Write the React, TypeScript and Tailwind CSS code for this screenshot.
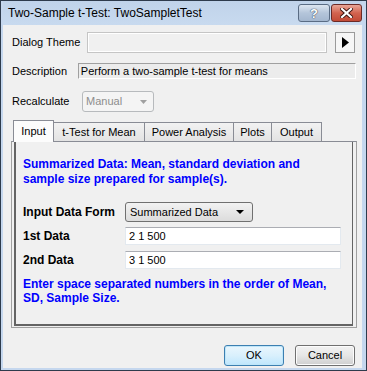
import React from 'react';

const font = { fontFamily: '"Liberation Sans", Arial, sans-serif' };

const Tab = ({ label, active, w }: { label: string; active?: boolean; w: string }) => (
  <div
    className={`${w} flex items-center justify-center border border-[#898c95] text-[11px] text-black ${
      active
        ? 'h-[22px] bg-[#fcfcfc] border-b-0 relative z-10 -mb-px'
        : 'h-[19px] border-b-0 -ml-px bg-gradient-to-b from-[#f2f2f2] to-[#e3e3e3]'
    }`}
  >
    {label}
  </div>
);

const WinButton = ({ label, primary }: { label: string; primary?: boolean }) => (
  <button
    className={`w-[60px] h-[21px] rounded-[3px] text-[11px] text-black border ${
      primary
        ? 'border-[#3c7fb1] bg-gradient-to-b from-[#eaf6fd] via-[#d9f0fc] to-[#bee6fd] shadow-[inset_0_0_0_1px_#bfe6f9]'
        : 'border-[#707070] bg-gradient-to-b from-[#f2f2f2] via-[#e6e6e6] to-[#cfcfcf] shadow-[inset_0_0_0_1px_#fcfcfc]'
    }`}
  >
    {label}
  </button>
);

export default function App() {
  return (
    <div
      className="w-[367px] h-[371px] bg-[#c5d7ee] border border-[#2e3b4c] flex flex-col pl-[2px] pr-[4px] pb-[2px] overflow-hidden"
      style={font}
    >
      {/* title bar */}
      <div className="h-[24px] flex items-start shrink-0 bg-gradient-to-b from-[#c0d3ea] to-[#c8daef]">
        <div className="text-[12px] text-black pl-[5px] pt-[5px] leading-[14px]">
          Two-Sample t-Test: TwoSampletTest
        </div>
        <div className="ml-auto flex pt-[3px] gap-[1px]">
          <div className="w-[32px] h-[18px] rounded-[3px] border border-[#5a6c84] bg-gradient-to-b from-[#dde6f1] via-[#b4c5da] to-[#a4b7cf] flex items-center justify-center">
            <span className="text-[13px] font-bold text-white leading-none [text-shadow:0_0_1px_#2b3b52,0_0_1px_#2b3b52]">?</span>
          </div>
          <div className="w-[31px] h-[18px] rounded-[3px] border border-[#6b2a26] bg-gradient-to-b from-[#e8a597] via-[#d2634f] to-[#c24a36] flex items-center justify-center">
            <svg width="13" height="10" viewBox="0 0 13 10">
              <path d="M2 1 L11 9 M11 1 L2 9" stroke="#3b1410" strokeWidth="4" strokeLinecap="square" />
              <path d="M2 1 L11 9 M11 1 L2 9" stroke="#ffffff" strokeWidth="2.2" strokeLinecap="square" />
            </svg>
          </div>
        </div>
      </div>

      {/* client area */}
      <div className="flex-1 bg-[#f0f0f0] flex flex-col pt-[7px] pl-[8px] pr-[6px] text-[11px] text-black">
        <div className="flex items-center h-[21px]">
          <span className="w-[76px] pl-px">Dialog Theme</span>
          <div className="w-[240px] h-[21px] border border-[#c5c5c5] bg-[#f0f0f0] shadow-[inset_0_0_0_1px_#ffffff]" />
          <div className="ml-[8px] w-[20px] h-[21px] border border-[#9a9a9a] bg-[#f6f6f6] flex items-center justify-center">
            <svg width="7" height="11" viewBox="0 0 7 11">
              <path d="M0 0 L7 5.5 L0 11 Z" fill="#000" />
            </svg>
          </div>
        </div>

        <div className="flex items-center h-[16px] mt-[10px]">
          <span className="w-[67px] pl-px">Description</span>
          <div className="w-[279px] h-[16px] border-t border-l border-[#a0a0a0] border-b border-r border-b-white border-r-white bg-[#ececec] flex items-center pl-[2px] leading-none">
            Perform a two-sample t-test for means
          </div>
        </div>

        <div className="flex items-center h-[21px] mt-[12px]">
          <span className="w-[71px] pl-px">Recalculate</span>
          <div className="w-[72px] h-[21px] rounded-[3px] border border-[#b7babd] bg-[#f4f4f4] flex items-center pl-[3px] pr-[6px] text-[#8d8d8d]">
            Manual
            <svg className="ml-auto" width="7" height="4" viewBox="0 0 7 4">
              <path d="M0 0 L7 0 L3.5 4 Z" fill="#a0a0a0" />
            </svg>
          </div>
        </div>

        {/* tabs */}
        <div className="flex items-end mt-[8px] ml-[2px]">
          <Tab label="Input" active w="w-[41px]" />
          <Tab label="t-Test for Mean" w="w-[92px]" />
          <Tab label="Power Analysis" w="w-[90px]" />
          <Tab label="Plots" w="w-[39px]" />
          <Tab label="Output" w="w-[51px]" />
        </div>

        <div className="w-[346px] h-[187px] border border-[#a0a0a0] border-t-[#898c95] flex">
          <div className="w-[339px] h-[184px] ml-[2px] border border-t-0 border-[#646464] border-l-2 border-b-2 flex flex-col pl-[7px] pr-[11px] font-bold">
            <div className="text-[#0000ff] text-[12px] leading-[15px] mt-[15px]">
              Summarized Data: Mean, standard deviation and
              <br />
              sample size prepared for sample(s).
            </div>

            <div className="flex items-center h-[20px] mt-[15px] text-[12px]">
              <span className="w-[102px]">Input Data Form</span>
              <div className="w-[128px] h-[20px] rounded-[3px] border border-[#707070] bg-gradient-to-b from-[#f2f2f2] to-[#dcdcdc] flex items-center pl-[4px] pr-[8px] font-normal text-[11px]">
                Summarized Data
                <svg className="ml-auto" width="8" height="4" viewBox="0 0 8 4">
                  <path d="M0 0 L8 0 L4 4 Z" fill="#000" />
                </svg>
              </div>
            </div>

            <div className="flex items-center h-[18px] mt-[5px] text-[12px]">
              <span className="w-[102px]">1st Data</span>
              <div className="w-[216px] h-[18px] border border-[#e3e9ef] border-t-[#abadb3] bg-white flex items-center pl-[3px] font-normal text-[11px]">
                2 1 500
              </div>
            </div>

            <div className="flex items-center h-[18px] mt-[6px] text-[12px]">
              <span className="w-[102px]">2nd Data</span>
              <div className="w-[216px] h-[18px] border border-[#e3e9ef] border-t-[#abadb3] bg-white flex items-center pl-[3px] font-normal text-[11px]">
                3 1 500
              </div>
            </div>

            <div className="text-[#0000ff] text-[12px] leading-[14px] mt-[8px]">
              Enter space separated numbers in the order of Mean,
              <br />
              SD, Sample Size.
            </div>
          </div>
        </div>

        <div className="flex justify-end gap-[11px] mt-[17px] pr-[1px]">
          <WinButton label="OK" primary />
          <WinButton label="Cancel" />
        </div>
      </div>
    </div>
  );
}
